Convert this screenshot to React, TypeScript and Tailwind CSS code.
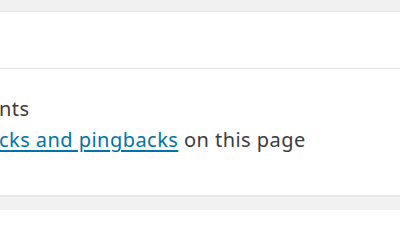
export default function App() {
  return (
    <div className="h-[210px] w-[400px] overflow-hidden bg-[#f1f1f1] pt-[11px] font-['Noto_Sans',sans-serif] text-[#3c3c3c]">
      <div className="border-y border-[#e5e5e5] bg-white shadow-[0_1px_1px_rgba(0,0,0,0.04)]">
        <div className="h-[57px] border-b border-[#e5e5e5]" />
        <div className="h-[126px] overflow-hidden pt-[25px] text-[20px] leading-[30px] tracking-[0.45px] whitespace-nowrap">
          <p className="-ml-[1px]">nts</p>
          <p className="-ml-[1px] mt-[1px]">
            <a href="#" className="text-[#0073aa] underline underline-offset-[3px]">cks and pingbacks</a> on this page
          </p>
        </div>
      </div>
    </div>
  );
}
